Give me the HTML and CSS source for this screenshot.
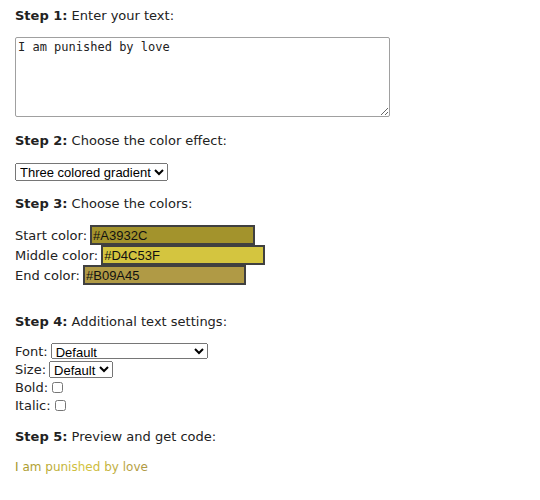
FILE: index.html
```html
<!DOCTYPE html>
<html lang="en">
<head>
  <meta charset="UTF-8">
  <title>Text Color Effects</title>
  <link rel="stylesheet" href="styles.css">
</head>
<body>

  <div class="tool">
    <p class="step step-1"><b>Step 1:</b> Enter your text:</p>
    <textarea id="text" class="text-input">I am punished by love</textarea>

    <p class="step step-2"><b>Step 2:</b> Choose the color effect:</p>
    <select id="effect" class="effect-select">
      <option>Three colored gradient</option>
    </select>

    <p class="step step-3"><b>Step 3:</b> Choose the colors:</p>
    <div class="colors">
      <div class="color-row">Start color: <input type="text" class="color-input" value="#A3932C" style="background-color: #A3932C; width: 165px;"></div>
      <div class="color-row">Middle color: <input type="text" class="color-input" value="#D4C53F" style="background-color: #D4C53F; width: 164px;"></div>
      <div class="color-row">End color: <input type="text" class="color-input" value="#B09A45" style="background-color: #B09A45; width: 163px;"></div>
    </div>

    <p class="step step-4"><b>Step 4:</b> Additional text settings:</p>
    <div class="settings">
      <div class="setting">Font: <select class="font-select"><option>Default</option></select></div>
      <div class="setting">Size: <select class="size-select"><option>Default</option></select></div>
      <div class="setting">Bold: <input type="checkbox" class="check"></div>
      <div class="setting">Italic: <input type="checkbox" class="check"></div>
    </div>

    <p class="step step-5"><b>Step 5:</b> Preview and get code:</p>
    <div id="preview" class="preview"></div>
  </div>

  <script>
    var text = "I am punished by love";
    var start = [0xA3, 0x93, 0x2C];
    var middle = [0xD4, 0xC5, 0x3F];
    var end = [0xB0, 0x9A, 0x45];

    function mix(a, b, t) {
      return a.map(function (v, i) { return Math.round(v + (b[i] - v) * t); });
    }

    // one span per letter, colours run start -> middle -> end
    var preview = document.getElementById('preview');
    var n = text.length;
    for (var i = 0; i < n; i++) {
      var t = i / (n - 1);
      var c = t < 0.5 ? mix(start, middle, t * 2) : mix(middle, end, (t - 0.5) * 2);
      var span = document.createElement('span');
      span.style.color = 'rgb(' + c.join(',') + ')';
      span.textContent = text[i];
      preview.appendChild(span);
    }
  </script>

</body>
</html>
```

FILE: styles.css
```css
body {
  font-family: "DejaVu Sans", Verdana, sans-serif;
  font-size: 13px;
  color: #222;
  background-color: #fff;
  margin: 0;
  padding: 0 15px;
}

.step {
  margin: 0;
  line-height: 20px;
  height: 20px;
}

.step-1 { margin-top: 6px; }
.step-2 { margin-top: 14px; }
.step-3 { margin-top: 13px; }
.step-4 { margin-top: 27px; }
.step-5 { margin-top: 13px; }

.text-input {
  display: block;
  margin: 11px 0 0;
  width: 375px;
  height: 80px;
  box-sizing: border-box;
  font-family: "DejaVu Sans Mono", monospace;
  font-size: 12px;
  color: #222;
  border: 1px solid #a0a0a0;
  border-radius: 2px;
  padding: 2px 2px;
  resize: vertical;
}

.effect-select,
.font-select,
.size-select {
  font-family: "Liberation Sans", Arial, sans-serif;
  font-size: 13px;
  color: #000;
  padding: 0;
  box-sizing: border-box;
}

.effect-select {
  display: block;
  margin-top: 12px;
  height: 18px;
}

.colors {
  margin-top: 11px;
}

.color-row {
  display: flex;
  align-items: center;
  gap: 3px;
  height: 20px;
}

.color-input {
  height: 20px;
  box-sizing: border-box;
  font-family: "Liberation Sans", Arial, sans-serif;
  font-size: 13px;
  border: 2px solid #404040;
  padding: 0 1px;
  margin: 0;
  color: #111;
}

.settings {
  margin-top: 10px;
}

.setting {
  display: flex;
  align-items: center;
  gap: 3px;
  height: 18px;
}

.font-select {
  width: 157px;
  height: 16px;
}

.size-select {
  height: 17px;
}

.check {
  width: 11px;
  height: 11px;
  margin: 0 0 0 1px;
}

.preview {
  margin-top: 10px;
  line-height: 20px;
  font-size: 12px;
}
```
